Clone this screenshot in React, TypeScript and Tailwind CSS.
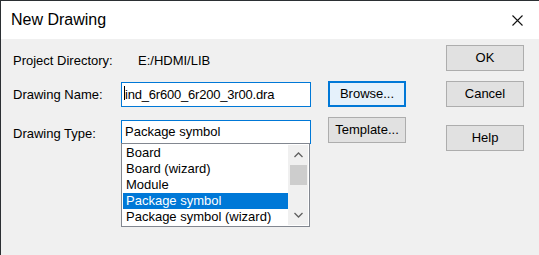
const items = ['Board', 'Board (wizard)', 'Module', 'Package symbol', 'Package symbol (wizard)'];

function Btn({ label, focused, className = '' }: { label: string; focused?: boolean; className?: string }) {
  return (
    <div
      className={`flex h-[26px] w-[78px] items-center justify-center text-[13px] text-black ${
        focused ? 'border-2 border-[#0078d7] bg-[#e5f1fb]' : 'border border-[#adadad] bg-[#e1e1e1]'
      } ${className}`}
    >
      {label}
    </div>
  );
}

function Chevron({ up }: { up?: boolean }) {
  return (
    <svg width="9" height="6" viewBox="0 0 9 6" className="text-[#606060]">
      <polyline
        points={up ? '0.5,5 4.5,1 8.5,5' : '0.5,1 4.5,5 8.5,1'}
        fill="none"
        stroke="currentColor"
        strokeWidth="1.3"
      />
    </svg>
  );
}

export default function App() {
  return (
    <div className="h-[255px] w-[539px] overflow-hidden border-l border-t border-[#2b2f33] bg-[#f0f0f0] font-['Liberation_Sans',Arial,sans-serif]">
      <div className="flex h-[38px] items-center justify-between bg-white pl-[10px] pr-[16px]">
        <span className="text-[16px] text-black">New Drawing</span>
        <svg width="11" height="11" viewBox="0 0 11 11">
          <path d="M0.5 0.5 L10.5 10.5 M10.5 0.5 L0.5 10.5" stroke="#111" strokeWidth="1.1" />
        </svg>
      </div>

      <div className="flex text-[13px] text-black">
        {/* fields */}
        <div className="pl-[12px] pt-[14px]">
          <div className="flex h-[16px] items-center">
            <span className="w-[108px]">Project Directory:</span>
            <span className="pl-[17px]">E:/HDMI/LIB</span>
          </div>
          <div className="mt-[13px] flex items-center">
            <span className="w-[108px]">Drawing Name:</span>
            <div className="flex h-[25px] w-[190px] items-center border border-[#0078d7] bg-white pl-[3px]">
              <span className="relative tracking-[-0.2px]">
                <span className="absolute -left-[1px] top-[1px] h-[14px] w-px bg-black" />
                ind_6r600_6r200_3r00.dra
              </span>
            </div>
          </div>
          <div className="mt-[13px] flex">
            <span className="w-[108px] pt-[4px]">Drawing Type:</span>
            <div className="w-[190px]">
              <div className="flex h-[24px] items-center border border-[#0078d7] bg-white pl-[3px]">Package symbol</div>
              <div className="-mt-px flex h-[84px] w-[189px] border border-[#828790] bg-white p-px">
                <div className="flex-1">
                  {items.map((it) => (
                    <div
                      key={it}
                      className={`h-[16px] pl-[3px] leading-[16px] ${
                        it === 'Package symbol' ? 'bg-[#0078d7] text-white' : ''
                      }`}
                    >
                      {it}
                    </div>
                  ))}
                </div>
                <div className="flex w-[20px] flex-col items-center bg-[#f0f0f0]">
                  <div className="flex h-[20px] items-center">
                    <Chevron up />
                  </div>
                  <div className="h-[20px] w-[17px] bg-[#cdcdcd]" />
                  <div className="flex-1" />
                  <div className="flex h-[20px] items-center">
                    <Chevron />
                  </div>
                </div>
              </div>
            </div>
          </div>
        </div>

        {/* middle buttons */}
        <div className="ml-[17px] flex flex-col pt-[42px]">
          <Btn label="Browse..." focused />
          <Btn label="Template..." className="mt-[10px]" />
        </div>

        {/* right buttons */}
        <div className="ml-[40px] flex flex-col pt-[6px]">
          <Btn label="OK" />
          <Btn label="Cancel" className="mt-[10px]" />
          <Btn label="Help" className="mt-[18px]" />
        </div>
      </div>
    </div>
  );
}
